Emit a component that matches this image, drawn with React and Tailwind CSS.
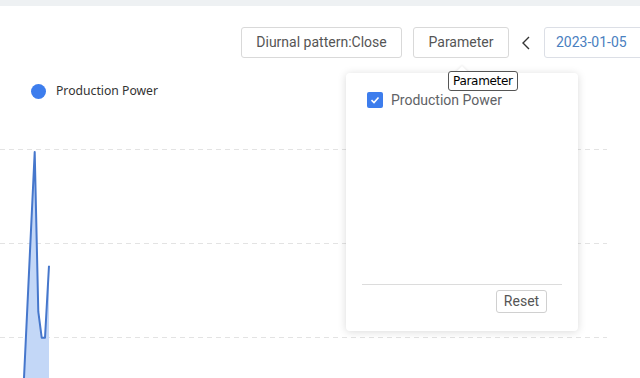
export default function App() {
  const line = "24,278 34.7,52 38.3,211.7 41.7,237.7 45,237.7 49,165.7";
  const fill = "24,278 34.7,52 38.3,211.7 41.7,237.7 45,237.7 49,165.7 49,278";

  return (
    <div className="relative w-[640px] h-[378px] overflow-hidden bg-white font-['Roboto',sans-serif]">
      <div className="h-[6px] bg-[#eef1f3]" />

      {/* toolbar */}
      <div className="flex items-center pt-[21px] pl-[241px] whitespace-nowrap">
        <button className="shrink-0 h-[31px] w-[161px] rounded-[3px] border border-[#d9d9d9] text-[14px] text-[#555]">
          Diurnal pattern:Close
        </button>
        <button className="shrink-0 ml-[11px] h-[31px] w-[96px] rounded-[3px] border border-[#d9d9d9] text-[14px] text-[#555]">
          Parameter
        </button>
        <svg width="12" height="16" viewBox="0 0 12 16" className="shrink-0 ml-[11px]">
          <path d="M9 2 L3 8 L9 14" fill="none" stroke="#333" strokeWidth="1.4" />
        </svg>
        <div className="shrink-0 ml-[12px] h-[31px] w-[120px] rounded-[3px] border border-[#dcdfe6] pl-[11px] flex items-center text-[14px] text-[#4a80c0]">
          2023-01-05
        </div>
      </div>

      {/* legend */}
      <div className="mt-[24px] flex items-center h-[18px] pl-[31px]">
        <span className="h-[15px] w-[15px] rounded-full bg-[#3d7ded]" />
        <span className="ml-[10px] text-[12.2px] text-[#333] font-['Noto_Sans',sans-serif]">Production Power</span>
      </div>

      {/* chart */}
      <svg width="640" height="278" className="block">
        {[49, 143, 237].map((y) => (
          <line key={y} x1="0" x2="607" y1={y + 0.5} y2={y + 0.5} stroke="#e3e3e3" strokeDasharray="5 4" />
        ))}
        <polygon points={fill} fill="#c3d7f7" />
        <polyline points={line} fill="none" stroke="#4677cc" strokeWidth="2" strokeLinejoin="round" />
      </svg>

      {/* popover */}
      <div className="absolute left-[346px] top-[73px] w-[232px] h-[258px] rounded-[4px] bg-white shadow-[0_1px_8px_rgba(0,0,0,0.15)]">
        <div className="absolute left-[111px] -top-[5px] h-[10px] w-[10px] rotate-45 bg-white shadow-[-1px_-1px_2px_rgba(0,0,0,0.06)]" />
        <div className="relative flex items-center pl-[21px] pt-[19px]">
          <span className="flex h-[16px] w-[16px] items-center justify-center rounded-[2px] bg-[#3d7ded]">
            <svg width="10" height="10" viewBox="0 0 10 10">
              <path d="M1.5 5.2 L4 7.5 L8.5 2.5" fill="none" stroke="white" strokeWidth="1.6" />
            </svg>
          </span>
          <span className="ml-[8px] text-[14px] text-[#606266] leading-[16px]">Production Power</span>
        </div>
        <div className="absolute left-[16px] right-[16px] top-[211px] border-t border-[#dcdcdc]" />
        <button className="absolute left-[150px] top-[217px] h-[23px] w-[51px] rounded-[3px] border border-[#d0d0d0] text-[14px] text-[#555] bg-white">
          Reset
        </button>
      </div>

      {/* tooltip */}
      <div className="absolute left-[448px] top-[71px] h-[20px] px-[4px] rounded-[3px] border border-[#555] bg-white text-[12px] leading-[18px] text-black font-['DejaVu_Sans',sans-serif] tracking-[-0.3px]">
        Parameter
      </div>
    </div>
  );
}
